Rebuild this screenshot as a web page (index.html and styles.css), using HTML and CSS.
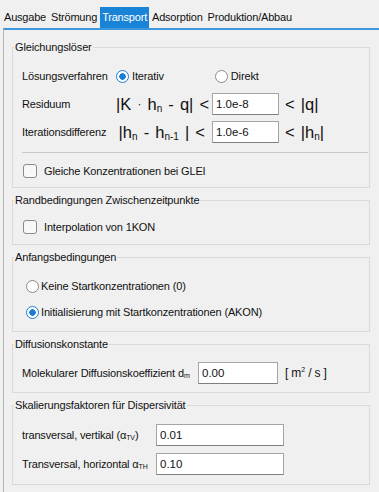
FILE: index.html
```html
<!DOCTYPE html>
<html lang="de">
<head>
    <meta charset="UTF-8">
    <title>Transport</title>
    <link rel="stylesheet" href="styles.css">
</head>
<body>
    <div class="tabs">
        <span class="tab">Ausgabe</span>
        <span class="tab">Strömung</span>
        <span class="tab active">Transport</span>
        <span class="tab">Adsorption</span>
        <span class="tab">Produktion/Abbau</span>
    </div>

    <div class="pane">
        <!-- Gleichungslöser -->
        <fieldset class="group group-solver">
            <legend>Gleichungslöser</legend>
            <div class="row row-method">
                <span class="label">Lösungsverfahren</span>
                <span class="radio checked"></span><span class="radio-text">Iterativ</span>
                <span class="radio direkt"></span><span class="radio-text">Direkt</span>
            </div>
            <div class="row row-crit">
                <span class="label">Residuum</span>
                <span class="math">|K <span class="dot">·</span> h<sub>n</sub> - q| &lt;</span>
                <input class="field crit" value="1.0e-8">
                <span class="math after">&lt; |q|</span>
            </div>
            <div class="row row-crit">
                <span class="label">Iterationsdifferenz</span>
                <span class="math">|h<sub>n</sub> - h<sub>n-1</sub> | &lt;</span>
                <input class="field crit" value="1.0e-6">
                <span class="math after">&lt; |h<sub>n</sub>|</span>
            </div>
            <div class="separator"></div>
            <div class="row row-check">
                <span class="checkbox"></span>
                <span>Gleiche Konzentrationen bei GLEI</span>
            </div>
        </fieldset>

        <!-- Randbedingungen -->
        <fieldset class="group group-bound">
            <legend>Randbedingungen Zwischenzeitpunkte</legend>
            <div class="row row-check">
                <span class="checkbox"></span>
                <span>Interpolation von 1KON</span>
            </div>
        </fieldset>

        <!-- Anfangsbedingungen -->
        <fieldset class="group group-start">
            <legend>Anfangsbedingungen</legend>
            <div class="row row-option">
                <span class="radio"></span><span>Keine Startkonzentrationen (0)</span>
            </div>
            <div class="row row-option">
                <span class="radio checked"></span><span>Initialisierung mit Startkonzentrationen (AKON)</span>
            </div>
        </fieldset>

        <!-- Diffusionskonstante -->
        <fieldset class="group group-diff">
            <legend>Diffusionskonstante</legend>
            <div class="row row-field">
                <span class="label-diff">Molekularer Diffusionskoeffizient d<sub class="small">m</sub></span>
                <input class="field diff" value="0.00">
                <span class="unit">[ m<sup>2</sup> / s ]</span>
            </div>
        </fieldset>

        <!-- Skalierungsfaktoren -->
        <fieldset class="group group-scale">
            <legend>Skalierungsfaktoren für Dispersivität</legend>
            <div class="row row-field">
                <span class="label-scale">transversal, vertikal (α<sub class="small">TV</sub>)</span>
                <input class="field scale" value="0.01">
            </div>
            <div class="row row-field">
                <span class="label-scale">Transversal, horizontal α<sub class="small">TH</sub></span>
                <input class="field scale" value="0.10">
            </div>
        </fieldset>
    </div>
</body>
</html>
```

FILE: styles.css
```css
body {
    margin: 0;
    background: #f0f0f0;
    font-family: "Liberation Sans", Arial, sans-serif;
    font-size: 11px;
    letter-spacing: -0.15px;
    color: #111;
    overflow: hidden;
}

.tabs {
    display: flex;
    padding: 7px 0 0 2px;
    height: 21px;
}

.tab {
    padding: 0 2px;
    margin-right: 1px;
    line-height: 21px;
    font-size: 11px;
    letter-spacing: -0.2px;
}

.tab.active {
    background: #1883d7;
    color: white;
}

.pane {
    margin-left: 3px;
    width: 358px;
    height: 470px;
    border-top: 2px solid #3d97dc;
    border-left: 1px solid #b4b4b4;
    border-right: 1px solid #c8c8c8;
    padding: 10px 9px 0 8px;
    display: flex;
    flex-direction: column;
    gap: 5px;
}

.group {
    margin: 0;
    border: 1px solid #dadada;
    padding: 0 1px 0 9px;
    min-width: 0;
    flex-shrink: 0;
}

.group legend {
    padding: 0 1px;
    margin-left: -8px;
    line-height: 14px;
    font-size: 11px;
}

.row {
    display: flex;
    align-items: center;
}

.label {
    width: 94px;
    flex-shrink: 0;
}

/* Gleichungslöser */
.group-solver {
    padding-top: 12px;
    padding-bottom: 8px;
}

.row-method {
    height: 20px;
}

.radio {
    width: 11px;
    height: 11px;
    border: 1px solid #8a8a8a;
    border-radius: 50%;
    background: white;
    margin-right: 3px;
    flex-shrink: 0;
}

.radio.checked {
    border-color: #1a7fd4;
    background: radial-gradient(circle, #1a7fd4 0 3px, white 3.5px);
}

.radio.direkt {
    margin-left: 51px;
}

.row-crit {
    height: 22px;
    margin-top: 7px;
}

.row-crit + .row-crit {
    margin-top: 6px;
}

.math {
    width: 89px;
    margin-right: 7px;
    text-align: right;
    font-size: 16.5px;
    letter-spacing: 0;
    word-spacing: 1.5px;
    white-space: nowrap;
    flex-shrink: 0;
}

.math sub {
    font-size: 10px;
    vertical-align: -2px;
}

.math .dot {
    font-size: 12px;
    vertical-align: 2px;
}

.math.after {
    width: auto;
    margin: 0 0 0 6px;
    text-align: left;
}

.field {
    box-sizing: border-box;
    height: 22px;
    border: 1px solid #a5a5a5;
    border-bottom-color: #7f7f7f;
    background: white;
    padding: 0 3px;
    font-family: inherit;
    font-size: 11.5px;
    color: #111;
    margin: 0;
    outline: none;
}

.field.crit {
    width: 67px;
}

.separator {
    height: 1px;
    background: #c8c8c8;
    margin: 9px 0 0 0;
}

.row-check {
    height: 16px;
    margin-top: 10px;
    gap: 7px;
}

.checkbox {
    width: 12px;
    height: 12px;
    border: 1px solid #8a8a8a;
    border-radius: 3px;
    background: #f8f8f8;
    margin-left: 1px;
}

/* Randbedingungen */
.group-bound {
    padding-top: 2px;
    padding-bottom: 9px;
}

/* Anfangsbedingungen */
.group-start {
    padding-top: 4px;
    padding-bottom: 11px;
}

.row-option {
    height: 16px;
    margin-top: 10px;
    padding-left: 4px;
}

.row-option .radio {
    margin-right: 2px;
}

/* Diffusionskonstante */
.group-diff {
    padding-top: 1px;
    padding-bottom: 8px;
}

.row-field {
    height: 22px;
    margin-top: 10px;
}

.label-diff {
    width: 176px;
    flex-shrink: 0;
}

.small {
    font-size: 7px;
    vertical-align: -1px;
}

.field.diff {
    width: 80px;
}

.unit {
    margin-left: 7px;
    font-size: 12px;
}

.unit sup {
    font-size: 7px;
}

/* Skalierungsfaktoren */
.group-scale {
    padding-top: 2px;
    padding-bottom: 9px;
}

.group-scale .row-field + .row-field {
    margin-top: 7px;
}

.label-scale {
    width: 134px;
    flex-shrink: 0;
}

.field.scale {
    width: 128px;
}
```
